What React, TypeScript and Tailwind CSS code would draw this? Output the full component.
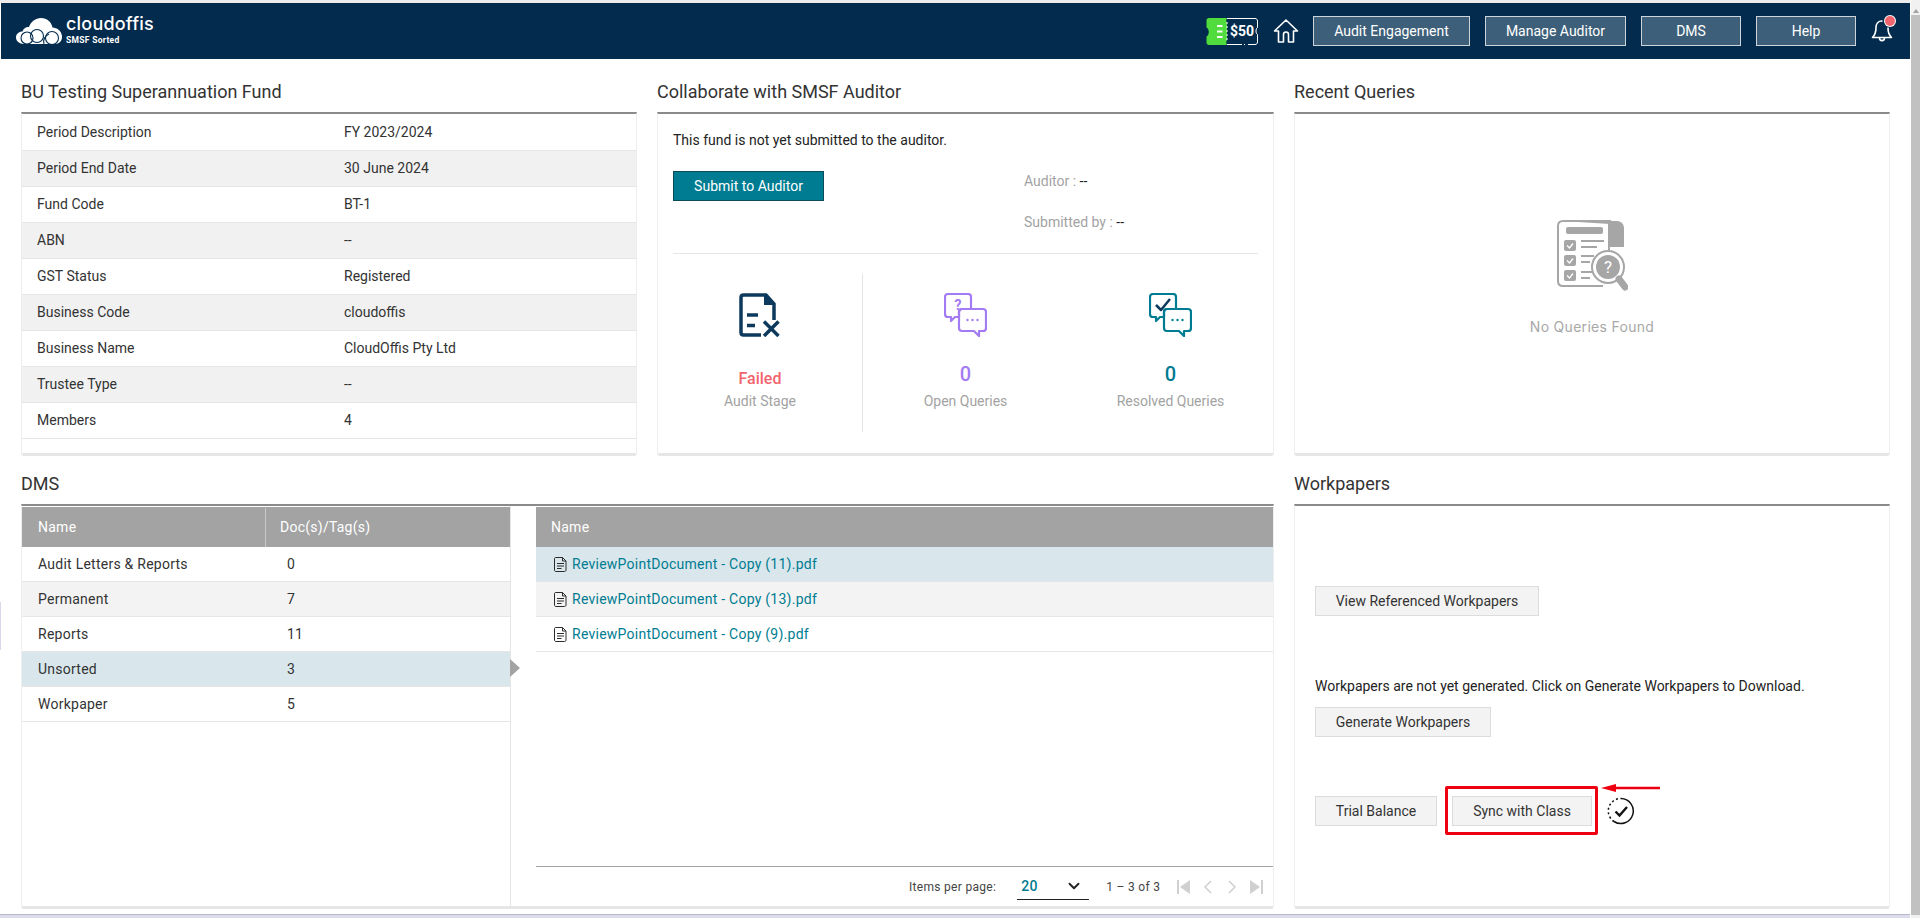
import React from 'react';
import { ChevronDown } from 'lucide-react';

const fundRows = [
  ['Period Description', 'FY 2023/2024'],
  ['Period End Date', '30 June 2024'],
  ['Fund Code', 'BT-1'],
  ['ABN', '--'],
  ['GST Status', 'Registered'],
  ['Business Code', 'cloudoffis'],
  ['Business Name', 'CloudOffis Pty Ltd'],
  ['Trustee Type', '--'],
  ['Members', '4'],
];

const folders = [
  ['Audit Letters & Reports', '0'],
  ['Permanent', '7'],
  ['Reports', '11'],
  ['Unsorted', '3'],
  ['Workpaper', '5'],
];

const documents = [
  'ReviewPointDocument - Copy (11).pdf',
  'ReviewPointDocument - Copy (13).pdf',
  'ReviewPointDocument - Copy (9).pdf',
];

const LogoMark = () => (
  <svg width="47" height="27" viewBox="0 0 47 27" fill="none">
    <path d="M8 26C3 26 0 23 0 19.500C0 16 3 13.500 6.500 13.500C7.500 10 10.500 8.500 13 9C15 3.500 19.500 0 25 0C31 0 35.500 4 36.500 9.500C41 9.500 45.500 13 46 18C46.500 23 43 26 39 26Z" fill="white" />
    <circle cx="11" cy="20" r="6" stroke="#022b4d" strokeWidth="1.100" />
    <circle cx="21" cy="18" r="6.500" stroke="#022b4d" strokeWidth="1.100" />
    <circle cx="36" cy="20" r="6.500" stroke="#022b4d" strokeWidth="1.100" />
    <path d="M28 26C27 22 29 18 33 16" stroke="#022b4d" strokeWidth="1.100" />
  </svg>
);

const CouponIcon = () => (
  <div className="relative flex h-[27px] w-[53px] items-stretch">
    <svg className="absolute inset-0" width="53" height="27" viewBox="0 0 53 27" fill="none">
      <path d="M21 0.500H49C50.500 0.500 51.500 1.500 51.500 3V9.500C49.500 10.500 49.500 15.500 51.500 16.500V24C51.500 25.500 50.500 26.500 49 26.500H42M36 26.500H21" stroke="white" strokeWidth="1" />
      <path d="M38 26.500H40" stroke="white" strokeWidth="1" strokeDasharray="1 1" />
      <path d="M3 0H21C20 2 20 3 21 5V22C20 24 20 25 21 27H3C1.500 27 0.500 26 0.500 24.500V18.500C3.500 17.500 3.500 10.500 0.500 9.500V2.500C0.500 1 1.500 0 3 0Z" fill="#4fdc3c" />
      <path d="M11 8H16.500M11 13.500H16.500M11 19H16.500" stroke="white" strokeWidth="2" />
      <path d="M21 4V24" stroke="white" strokeWidth="1" strokeDasharray="2 2" />
    </svg>
    <span className="relative ml-[24px] mt-[5px] text-[14px] leading-[16px] font-bold text-white">$50</span>
  </div>
);

const HomeIcon = () => (
  <svg width="26" height="26" viewBox="0 0 26 26" fill="none" stroke="white" strokeWidth="1.600" strokeLinejoin="round" strokeLinecap="round">
    <path d="M13 2L1.500 13H5.500V24H10.500V16.500C10.500 15 11.500 14 13 14C14.500 14 15.500 15 15.500 16.500V24H20.500V13H24.500Z" />
  </svg>
);

const BellIcon = () => (
  <div className="relative h-[26px] w-[24px]">
    <svg width="24" height="26" viewBox="0 0 24 26" fill="none" stroke="white" strokeWidth="1.600" strokeLinecap="round" strokeLinejoin="round">
      <path d="M11 4C7 4 5 7 5 10.500C5 15 4 18 1.500 20.500H20.500C18 18 17 15 17 11" />
      <path d="M8.500 21C8.500 24.500 13.500 24.500 13.500 21" />
    </svg>
    <span className="absolute right-[0px] top-[-1px] h-[10px] w-[10px] rounded-full bg-[#f2646e] ring-1 ring-white" />
  </div>
);

const FailedDocIcon = () => (
  <svg width="41" height="44" viewBox="0 0 41 44" fill="none">
    <path d="M22 2H4.500C3 2 2 3 2 4.500V39.500C2 41 3 42 4.500 42H22" stroke="#0d3a5c" strokeWidth="3.500" />
    <path d="M22 2H27L35 11V27" stroke="#0d3a5c" strokeWidth="3.500" />
    <path d="M25 0.500V12H36Z" fill="#0d3a5c" />
    <path d="M8 22H19M8 32.500H16" stroke="#0d3a5c" strokeWidth="3.500" />
    <path d="M25 28.500L39.500 43M39.500 28.500L25 43" stroke="#0d3a5c" strokeWidth="3.500" />
  </svg>
);

const ChatIcon = ({ color, check }: { color: string; check?: boolean }) => (
  <svg width="43" height="44" viewBox="0 0 43 44" fill="none" stroke={color} strokeWidth="2.200" strokeLinejoin="round">
    <path d="M4 1H24C26 1 27 2 27 4V16H18C16 16 15 17 15 19V24H11L7 28V24H4C2 24 1 23 1 21V4C1 2 2 1 4 1Z" />
    <path d="M18 16H39C41 16 42 17 42 19V35C42 37 41 38 39 38H35V43L30 38H18C16 38 15 37 15 35V19C15 17 16 16 18 16Z" />
    {check ? (
      <path d="M7 12L12 17L21 6" strokeWidth="2.500" stroke="#0d3a5c" />
    ) : (
      <text x="14" y="17" fontSize="14" fontWeight="700" fontFamily="Roboto" fill={color} stroke="none" textAnchor="middle">?</text>
    )}
    <circle cx="23.500" cy="27" r="1.200" fill={color} stroke="none" />
    <circle cx="28.500" cy="27" r="1.200" fill={color} stroke="none" />
    <circle cx="33.500" cy="27" r="1.200" fill={color} stroke="none" />
  </svg>
);

const NoQueriesIcon = () => (
  <svg width="71" height="72" viewBox="0 0 71 72" fill="none">
    <path d="M5 1H60C64 1 67 4 67 8V27H53V4" fill="#a6a6a6" />
    <path d="M46 66H6C3 66 1 64 1 61V6C1 3 3 1 6 1H54C52 2 52 4 52 6V30" stroke="#a6a6a6" strokeWidth="2" />
    <rect x="9" y="7" width="37" height="7" rx="2" fill="#a6a6a6" />
    <rect x="7" y="20" width="12" height="11" rx="2" fill="#a6a6a6" />
    <rect x="7" y="35" width="12" height="11" rx="2" fill="#a6a6a6" />
    <rect x="7" y="50" width="12" height="11" rx="2" fill="#a6a6a6" />
    <path d="M10 25.500L12.500 28L16 23.500M10 40.500L12.500 43L16 38.500M10 55.500L12.500 58L16 53.500" stroke="white" strokeWidth="1.300" />
    <path d="M24 21H47M24 27H40M24 36H37M24 42H33M24 52H36M24 58H33" stroke="#a6a6a6" strokeWidth="2" />
    <circle cx="51" cy="47" r="16" fill="white" stroke="#a6a6a6" strokeWidth="2" />
    <circle cx="51" cy="47" r="12" fill="#a6a6a6" />
    <text x="51" y="53" fontSize="17" fontFamily="Roboto" fill="white" textAnchor="middle">?</text>
    <path d="M62 59L68 67" stroke="#a6a6a6" strokeWidth="7" strokeLinecap="round" />
  </svg>
);

const DocFileIcon = () => (
  <svg width="13" height="15" viewBox="0 0 13 15" fill="none" stroke="#2b2b2b" strokeWidth="1">
    <path d="M1.500 0.500H8.500L12 4V13C12 13.800 11.500 14.500 10.500 14.500H2C1 14.500 0.500 13.800 0.500 13V1.500C0.500 1 1 0.500 1.500 0.500Z" />
    <path d="M8.500 0.500V4H12M3 6.500H10M3 9H10M3 11.500H7.500" />
  </svg>
);

const PagerIcon = ({ kind }: { kind: 'first' | 'prev' | 'next' | 'last' }) => (
  <svg width="14" height="16" viewBox="0 0 14 16" fill="#d0d0d0" stroke="none">
    {kind === 'first' && <path d="M0 1H2V15H0ZM13 1V15L3 8Z" />}
    {kind === 'prev' && <path d="M10 2L4 8L10 14" fill="none" stroke="#d0d0d0" strokeWidth="1.500" />}
    {kind === 'next' && <path d="M4 2L10 8L4 14" fill="none" stroke="#d0d0d0" strokeWidth="1.500" />}
    {kind === 'last' && <path d="M1 1L11 8L1 15ZM12 1H14V15H12Z" />}
  </svg>
);

const SyncedIcon = () => (
  <svg width="28" height="28" viewBox="0 0 28 28" fill="none">
    <path d="M14 1.500A12.500 12.500 0 1 1 7 24.500" stroke="#111" strokeWidth="1.500" />
    <path d="M7 24.500A12.500 12.500 0 0 1 14 1.500" stroke="#111" strokeWidth="1.500" strokeDasharray="2 2.500" />
    <path d="M8.500 14.500L12.500 18.500L20 10" stroke="#111" strokeWidth="2.400" />
  </svg>
);

const Section = ({ title, className, wrapClass = '', children }: { title: string; className: string; wrapClass?: string; children: React.ReactNode }) => (
  <section className={`flex flex-col ${wrapClass}`}>
    <h2 className="flex-1 flex items-end pb-[10px] text-[18px] leading-[21px] font-normal text-[#333]">{title}</h2>
    <div className={`border-t-2 border-t-[#8a8a8a] border-x border-x-[#eeeeee] border-b-[3px] border-b-[#e6e6e6] rounded-b-[3px] bg-white ${className}`}>
      {children}
    </div>
  </section>
);

const GreyButton = ({ children, className = '' }: { children: React.ReactNode; className?: string }) => (
  <button className={`h-[30px] border border-[#dcdcdc] bg-[#f3f3f3] text-[14px] text-[#333] ${className}`}>{children}</button>
);

const Stat = ({ icon, value, label, valueClass, labelClass }: { icon: React.ReactNode; value: string; label: string; valueClass: string; labelClass: string }) => (
  <div className="flex flex-col items-center">
    <div className="h-[44px]">{icon}</div>
    <div className={`leading-[24px] ${valueClass}`}>{value}</div>
    <div className={`text-[14px] leading-[18px] text-[#a3a3a3] ${labelClass}`}>{label}</div>
  </div>
);

export default function App() {
  return (
    <div className="h-[918px] w-[1920px] overflow-hidden bg-white font-['Roboto',sans-serif] text-[14px] text-[#333] flex">
      <div className="w-[1910px] flex flex-col">
        <div className="h-[3px] bg-[#ececec]" />
        {/* Header */}
        <header className="h-[56px] ml-[1px] bg-[#022b4d] flex items-center">
          <div className="ml-[15px] flex items-center gap-[3px]">
            <LogoMark />
            <div className="text-white">
              <div className="font-['Inter',sans-serif] text-[18px] leading-[20px] font-medium tracking-[0.2px] mt-[-3px]">cloudoffis</div>
              <div className="text-[8.500px] leading-[10px] font-bold tracking-[0.3px] mt-[1px]">SMSF Sorted</div>
            </div>
          </div>
          <div className="ml-auto mr-[54px] flex items-center text-white">
            <CouponIcon />
            <div className="ml-[14px] mr-[14px]"><HomeIcon /></div>
            <div className="flex gap-[15px]">
              <button className="h-[30px] w-[157px] border border-[#cdd5db] bg-[#3e5f79]">Audit Engagement</button>
              <button className="h-[30px] w-[141px] border border-[#cdd5db] bg-[#3e5f79]">Manage Auditor</button>
              <button className="h-[30px] w-[100px] border border-[#cdd5db] bg-[#3e5f79]">DMS</button>
              <button className="h-[30px] w-[100px] border border-[#cdd5db] bg-[#3e5f79]">Help</button>
            </div>
          </div>
          <div className="absolute left-[1871px] top-[17px]"><BellIcon /></div>
        </header>

        {/* Main grid */}
        <main className="pl-[21px] grid grid-cols-[616px_617px_596px] grid-rows-[397px_453px] gap-x-[20px]">
          <Section title="BU Testing Superannuation Fund" className="h-[344px] pt-[1px]">
            {fundRows.map(([label, value], i) => (
              <div key={label} className={`h-[36px] flex items-center border-b border-[#e6e6e6] ${i % 2 === 1 ? 'bg-[#f1f1f1]' : 'bg-white'}`}>
                <span className="w-[322px] pl-[15px]">{label}</span>
                <span>{value}</span>
              </div>
            ))}
          </Section>

          <Section title="Collaborate with SMSF Auditor" className="h-[344px] px-[15px]">
            <p className="pt-[18px] leading-[16px] text-[#222]">This fund is not yet submitted to the auditor.</p>
            <div className="mt-[23px] h-[83px] flex border-b border-[#e6e6e6]">
              <button className="h-[30px] w-[151px] border border-[#0d4a5c] bg-[#007c92] text-white">Submit to Auditor</button>
              <div className="ml-[200px] pt-[2px]">
                <div className="leading-[16px] text-[#a3a3a3]">Auditor : <span className="text-[#222]">--</span></div>
                <div className="mt-[25px] leading-[16px] text-[#a3a3a3]">Submitted by : <span className="text-[#222]">--</span></div>
              </div>
            </div>
            <div className="mt-[20px] flex">
              <div className="w-[190px] shrink-0 h-[158px] border-r border-[#e6e6e6] pt-[19px] pr-[15px] flex justify-center">
                <Stat icon={<FailedDocIcon />} value="Failed" label="Audit Stage" valueClass="mt-[30px] text-[16px] font-medium text-[#f2646e]" labelClass="mt-[1px]" />
              </div>
              <div className="w-[205px] shrink-0 pt-[19px] flex justify-center">
                <Stat icon={<ChatIcon color="#a37bf2" />} value="0" label="Open Queries" valueClass="mt-[25px] text-[20px] font-medium text-[#a37bf2]" labelClass="mt-[6px]" />
              </div>
              <div className="w-[205px] shrink-0 pt-[19px] flex justify-center">
                <Stat icon={<ChatIcon color="#007c92" check />} value="0" label="Resolved Queries" valueClass="mt-[25px] text-[20px] font-medium text-[#007c92]" labelClass="mt-[6px]" />
              </div>
            </div>
          </Section>

          <Section title="Recent Queries" className="h-[344px] flex flex-col items-center">
            <div className="mt-[106px]"><NoQueriesIcon /></div>
            <div className="mt-[25px] font-['Inter',sans-serif] text-[14px] leading-[20px] tracking-[0.3px] text-[#a8a8a8]">No Queries Found</div>
          </Section>

          <Section title="DMS" wrapClass="col-span-2" className="h-[405px] flex tracking-[0.25px]">
            <div className="w-[489px] border-r border-[#e6e6e6] relative pt-[1px]">
              <div className="h-[40px] pt-[1px] bg-[#a3a3a3] text-white flex items-center">
                <span className="w-[244px] h-full flex items-center pl-[16px] border-r border-[#c8c8c8]">Name</span>
                <span className="pl-[14px]">Doc(s)/Tag(s)</span>
              </div>
              {folders.map(([name, count], i) => (
                <div key={name} className={`h-[35px] flex items-center border-b border-[#e6e6e6] ${name === 'Unsorted' ? 'bg-[#d9e7ec]' : i % 2 === 1 ? 'bg-[#f3f3f3]' : 'bg-white'}`}>
                  <span className="w-[244px] pl-[16px]">{name}</span>
                  <span className="pl-[21px]">{count}</span>
                </div>
              ))}
              <span className="absolute left-[488px] top-[153px] border-y-[9px] border-y-transparent border-l-[10px] border-l-[#a3a3a3]" />
            </div>
            <div className="ml-[25px] flex-1 flex flex-col pt-[1px]">
              <div className="h-[40px] pt-[1px] bg-[#a3a3a3] text-white flex items-center pl-[15px]">Name</div>
              {documents.map((doc, i) => (
                <div key={doc} className={`h-[35px] flex items-center gap-[5px] pl-[18px] border-b border-[#e6e6e6] text-[#007c92] ${i === 0 ? 'bg-[#d9e7ec]' : i === 1 ? 'bg-[#f3f3f3]' : 'bg-white'}`}>
                  <DocFileIcon />
                  <span>{doc}</span>
                </div>
              ))}
              <div className="mt-auto h-[40px] border-t border-[#a3a3a3] flex items-center text-[12px] tracking-[0.3px]">
                <span className="ml-[373px] text-[#444]">Items per page:</span>
                <div className="ml-[21px] w-[72px] h-[26px] border-b border-[#222] flex items-center justify-between pl-[4px] pr-[6px] text-[14px] font-medium text-[#007c92]">
                  <span>20</span>
                  <ChevronDown size={18} strokeWidth={2.500} className="text-[#222]" />
                </div>
                <span className="ml-[17px] text-[#444]">1 – 3 of 3</span>
                <div className="ml-auto mr-[10px] flex gap-[10px]">
                  <PagerIcon kind="first" />
                  <PagerIcon kind="prev" />
                  <PagerIcon kind="next" />
                  <PagerIcon kind="last" />
                </div>
              </div>
            </div>
          </Section>

          <Section title="Workpapers" className="h-[405px] pl-[20px] flex flex-col items-start">
            <GreyButton className="mt-[80px] w-[224px]">View Referenced Workpapers</GreyButton>
            <p className="mt-[61px] leading-[18px] text-[#222]">Workpapers are not yet generated. Click on Generate Workpapers to Download.</p>
            <GreyButton className="mt-[12px] w-[176px]">Generate Workpapers</GreyButton>
            <div className="mt-[59px] flex items-center">
              <GreyButton className="w-[122px]">Trial Balance</GreyButton>
              <div className="relative ml-[15px]">
                <GreyButton className="w-[140px] block">Sync with Class</GreyButton>
                <span className="absolute left-[-7px] top-[-10px] w-[153px] h-[49px] border-[3px] border-[#ee0010] rounded-[2px]" />
                <svg className="absolute left-[149px] top-[-14px]" width="60" height="12" viewBox="0 0 60 12" fill="#ee0010">
                  <path d="M0 6L15 2V4.800H59V7.200H15V10Z" />
                </svg>
              </div>
              <div className="ml-[15px]"><SyncedIcon /></div>
            </div>
          </Section>
        </main>
      </div>
      {/* Scrollbar */}
      <div className="ml-[1px] w-[9px] h-[918px] bg-[#f1f1f1] flex flex-col items-center pt-[9px]">
        <span className="border-x-[3px] border-x-transparent border-b-[4px] border-b-[#a3a3a3]" />
        <div className="mt-[2px] w-full h-[900px] bg-[#c1c1c1]" />
      </div>
      <div className="absolute left-0 top-[914px] w-[1910px] h-[4px] bg-[#dcdcec] border-t border-[#b8b8cc]" />
      <div className="absolute left-0 top-[602px] w-[1px] h-[48px] bg-[#d8d8ea]" />
    </div>
  );
}
